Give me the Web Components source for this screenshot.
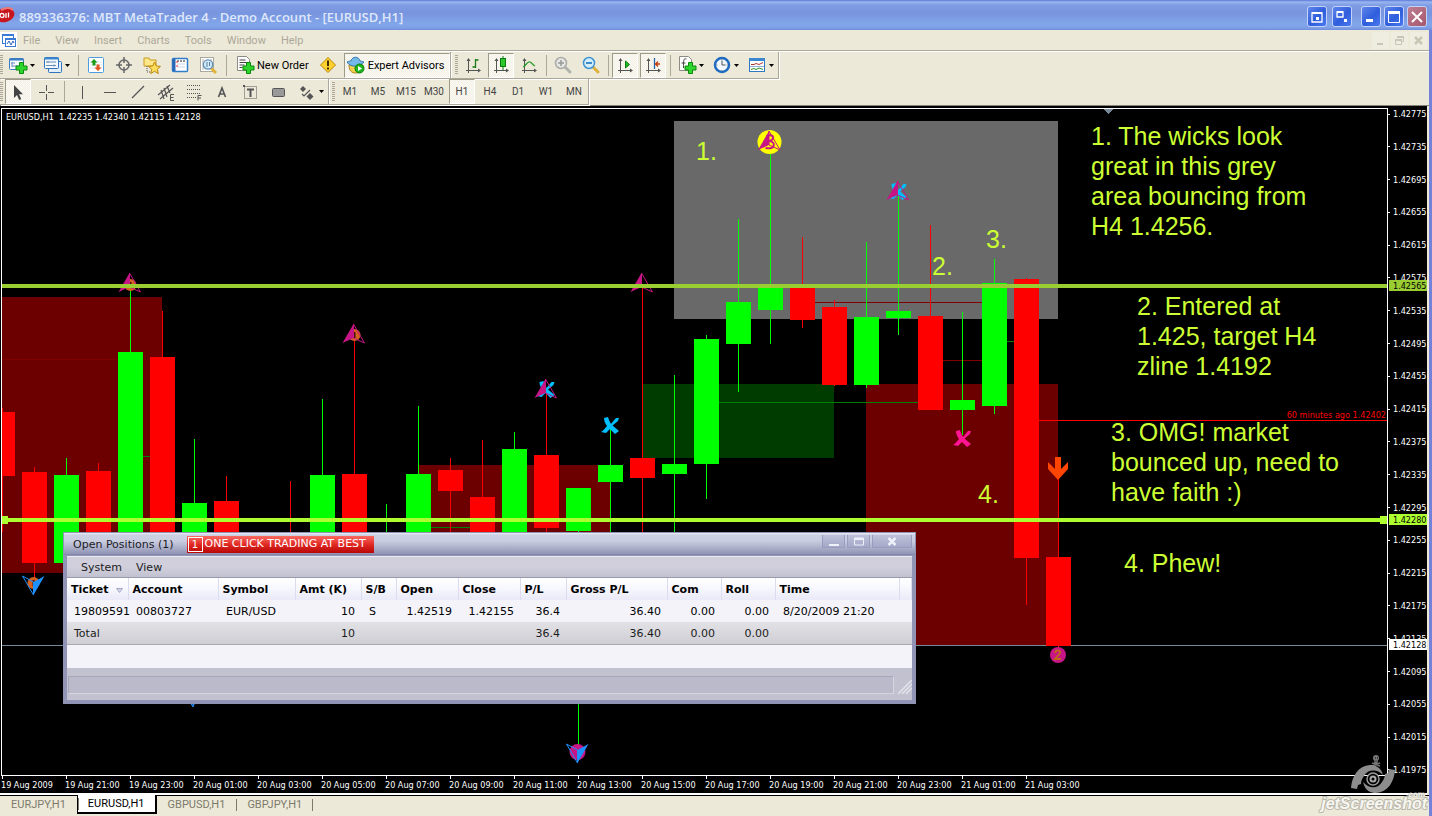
<!DOCTYPE html>
<html lang="en">
<head>
<meta charset="utf-8">
<title>889336376: MBT MetaTrader 4 - Demo Account - [EURUSD,H1]</title>
<style>
  html, body { margin: 0; height: 100%; }
  body { background: #ece9d8; font-family: Roboto, "Noto Sans", sans-serif; font-size: 11px; overflow: hidden; }
</style>
</head>
<body>
<trader-app></trader-app>
<script>
const define = (name, html, setup) => {
  const template = document.createElement('template');
  template.innerHTML = html;
  customElements.define(name, class extends HTMLElement {
    constructor() {
      super();
      this.attachShadow({ mode: 'open' }).append(template.content.cloneNode(true));
    }
    connectedCallback() { if (setup) setup(this, this.shadowRoot); }
  });
};

/* ---------- toolbar glyphs, 20 x 20 each ---------- */
const plus = '<path d="M11.5 7.500h4v3.500h3.500v4h-3.500v3.500h-4v-3.500h-3.500v-4h3.500z" fill="#2fd52f" stroke="#0a8a0a"/>';
const axes = '<path d="M5.500 4v14M3 15.500h14" stroke="#555" fill="none"/><path d="M3.500 6l2-3 2 3zM15 13.500l3 2-3 2z" fill="#555"/>';
const glass = (rim, fill, handle) => `<path d="M12 12l5 5" stroke="${handle}" stroke-width="3" stroke-linecap="round"/><circle cx="8" cy="8" r="5.500" fill="${fill}" stroke="${rim}" stroke-width="1.500"/>`;
const ICONS = {
  newchart: '<rect x="1.500" y="3.500" width="14" height="11" rx="1" fill="#f4faff" stroke="#3b7cc0"/><path d="M1.500 4.500h14" stroke="#3b7cc0" stroke-width="2"/><path d="M4 7v5M3 8h4M4 11h6" stroke="#6c8fb4"/>' + plus,
  profiles: '<rect x="5.500" y="6.500" width="13" height="11" rx="1" fill="#e2effb" stroke="#2f74bd"/><rect x="1.500" y="2.500" width="14" height="11" rx="1" fill="#f2f8fe" stroke="#2f74bd"/><path d="M1.500 3.500h14" stroke="#3b86d0" stroke-width="2"/><path d="M3 7h10M3 10.500h10M5 6v2M11 9.500v2" stroke="#6a8db0"/>',
  market: '<rect x="2.500" y="2.500" width="15" height="15" rx="1" fill="#fff" stroke="#4a9be0"/><path d="M4 7h12M4 10h12M4 13h12" stroke="#dbe6ef"/><path d="M8 4l3.500 3.500h-2v3h-3v-3h-2z" fill="#1a9c1a"/><path d="M12 16l3.500-3.500h-2v-3h-3v3h-2z" fill="#e2551d"/>',
  crosshair: '<circle cx="10" cy="10" r="5" fill="none" stroke="#666" stroke-width="1.500"/><path d="M10 2v6M10 12v6M2 10h6M12 10h6" stroke="#666" stroke-width="1.500"/>',
  navigator: '<path d="M2 3h5l1 2h6v6H2z" fill="#ffe88a" stroke="#c79a1c"/><path d="M5 11v6h4" stroke="#555" stroke-dasharray="1 1" fill="none"/><path d="M12.500 7l1.800 4 4.200.4-3.200 2.900 1 4.200-3.800-2.200-3.800 2.200 1-4.200L6.500 11.400l4.200-.4z" fill="#ffdf5a" stroke="#b98711"/>',
  terminal: '<rect x="2.500" y="3.500" width="15" height="13" rx="1" fill="#fff" stroke="#2f7ccc" stroke-width="1.500"/><path d="M4 4v12" stroke="#2868b4" stroke-width="3"/><path d="M7 6h9" stroke="#222" stroke-dasharray="2 1"/><path d="M7 9h8M7 12h8" stroke="#c9d5e4"/><path d="M7 6v2M7 10v2" stroke="#e33"/>',
  tester: '<rect x="2.500" y="2.500" width="13" height="14" fill="#fff" stroke="#a9a9a0"/><path d="M5 4v11M8 5v9M13 4v8" stroke="#c1b69b"/><path d="M13 13l5 5" stroke="#e2b23a" stroke-width="3"/><circle cx="10" cy="9.500" r="4.700" fill="#cfe9fb" fill-opacity=".85" stroke="#5d8fb8" stroke-width="1.300"/><path d="M9 7v5M11.500 7v4" stroke="#5580a2"/>',
  order: '<path d="M2.500 1.500h9l3 3v11h-12z" fill="#fff" stroke="#8c8c84"/><path d="M4.500 5h6M4.500 7.500h8M4.500 10h5M4.500 12.500h3" stroke="#444"/>' + plus,
  warning: '<path d="M10 2.500l7.500 7.500-7.500 7.500L2.500 10z" fill="#ffd12e" stroke="#b88706" stroke-linejoin="round"/><path d="M10 5.500v5.500M10 12.500v2" stroke="#3c2d00" stroke-width="2"/>',
  expert: '<path d="M3 10c0 8 5 8 7 8s7-1 7-8z" fill="#f3cf4e" stroke="#ad8520"/><path d="M1 7c3 6 14 5 17 0-3-1-3-1-4-1-1-5-8-5-9 0-1 0-2 0-4 1z" fill="#74b9ea" stroke="#3579ab"/><circle cx="13.500" cy="13.500" r="4.500" fill="#1fb51f" stroke="#0b7d0b"/><path d="M12 11l4 2.500-4 2.500z" fill="#fff"/>',
  bars: axes + '<path d="M12.500 4v9M12.500 5h3M9.500 12h3" stroke="#1a7a1a" fill="none" stroke-width="1.300"/>',
  candles: axes + '<path d="M12 1v14" stroke="#0a7a0a"/><rect x="9.500" y="3.500" width="5" height="8" fill="#2ec82e" stroke="#0a7a0a"/>',
  line: axes + '<path d="M4 12c3-1 4-6 7-5 2 1 3 3 5 4" stroke="#2b9c2b" fill="none" stroke-width="1.300"/>',
  zoomin: glass('#aaa', '#e6e6e2', '#b3b3ad') + '<path d="M5 8h6M8 5v6" stroke="#999" stroke-width="1.500"/>',
  zoomout: glass('#3e94d2', '#d3edfc', '#dfb03a') + '<path d="M5 8h6" stroke="#2d7fc0" stroke-width="1.800"/>',
  scroll: axes + '<path d="M10.500 6l4 3.500-4 3.500z" fill="#27b827" stroke="#0b7d0b"/>',
  shift: axes + '<path d="M11.500 3v11" stroke="#2b63a8" stroke-width="1.300"/><path d="M17 9h-4M15 6.500L12.500 9l2.500 2.500" stroke="#c43a0a" fill="none" stroke-width="1.300"/>',
  indicator: '<path d="M2.500 1.500h9l3 3v11h-12z" fill="#fff" stroke="#8c8c84"/><path d="M9.500 4c-3-1-3 1-3 9M4.500 8h4" stroke="#444" fill="none"/>' + plus,
  period: '<circle cx="10" cy="10" r="7" fill="#f2f8fd" stroke="#1f6bc1" stroke-width="2.500"/><path d="M10 5.500V10h3.500" stroke="#555" fill="none"/><path d="M10 4v1M10 15v1M4.500 10h1M14.500 10h1" stroke="#888"/>',
  templates: '<rect x="2.500" y="3.500" width="15" height="13" fill="#fff" stroke="#2f78c4"/><path d="M2 4.500h16" stroke="#3b86d0" stroke-width="3"/><path d="M4 9.500h3l2-1 3 1 4-2" stroke="#a33" fill="none"/><path d="M3 11.500h14" stroke="#8fb2d2"/><path d="M4 14.500l3-1 2 1 3-1.500 4 1.500" stroke="#2a922a" fill="none"/>',
  cursor: '<path d="M6 3v13l3-3 2.200 5 2-1-2.200-4.800H15z" fill="#444"/>',
  cross: '<path d="M10.500 3v6M10.500 12v6M3 10.500h6M12 10.500h6" stroke="#555"/>',
  vline: '<path d="M10.500 4v13" stroke="#555"/>',
  hline: '<path d="M4 10.500h12" stroke="#555"/>',
  trend: '<path d="M4 16L16 4" stroke="#555" stroke-width="1.300"/>',
  channel: '<path d="M2 13L14 3M4 17L17 6M5 8l3 9M8 6l3 9M11 4l3 7" stroke="#555" stroke-width="1.200"/><path d="M18 12.500h-3.500v6h3.500M14.500 15.500h3" stroke="#555" fill="none"/>',
  fibo: '<path d="M3 3.500h14M3 7.500h14M3 11.500h14M3 15.500h9" stroke="#555" stroke-dasharray="1 1"/><path d="M17.500 13.500h-3.500v5M14 16h3" stroke="#555" fill="none"/>',
  text: '<path d="M6.500 15l3.500-9 3.500 9M7.500 12h5" stroke="#555" stroke-width="1.600" fill="none"/>',
  label: '<rect x="4.500" y="4.500" width="12" height="12" fill="none" stroke="#555" stroke-dasharray="1 1"/><path d="M7 7.500h7M10.500 7.500V15" stroke="#555" stroke-width="2"/><rect x="3" y="3" width="2" height="2" fill="#555"/>',
  rect: '<rect x="4.500" y="6.500" width="12" height="8" rx="1" fill="#999" stroke="#555"/>',
  arrows: '<path d="M6 4l3 3-3 3-3-3z" fill="#555"/><path d="M5 12l2 2 6-6" fill="none" stroke="#555" stroke-width="1.200"/><path d="M13 11l3.500 3.500L13 18l-3.500-3.500z" fill="#555"/>'
};

define('tool-button', `
<style>
  :host { display: flex; }
  button { display: flex; align-items: center; justify-content: center; gap: 2px; box-sizing: border-box; width: 28px; height: 25px; padding: 0; margin: 0;
    border: 1px solid transparent; background: none; font: 11px Roboto, "Noto Sans", sans-serif; color: #000; white-space: nowrap; }
  svg { width: 20px; height: 20px; flex: none; }
  svg.caret { width: 5px; height: 3px; }
  :host([drop]) button { width: var(--drop, 36px); gap: 2px; }
  :host([wide]) button { width: auto; padding: 0 4px; }
  :host([period]) button { color: #444; font-size: 10px; }
  :host([pressed]) button { border-color: #9d9a88 #fff #fff #9d9a88; background: repeating-conic-gradient(#f3f1e6 0 25%, #faf9f4 0 50%) 0 0 / 2px 2px; margin-right: 1px; margin-left: 1px; width: 26px; }
  :host([pressed][wide]) button { width: auto; margin: 0 0 0 2px; padding: 0 5px 0 1px; }
</style>
<button type="button"><slot></slot></button>`, (host, root) => {
  const button = root.querySelector('button');
  const icon = host.getAttribute('icon');
  if (icon) button.insertAdjacentHTML('afterbegin', `<svg viewBox="0 0 20 20" fill="none" aria-hidden="true">${ICONS[icon]}</svg>`);
  if (host.hasAttribute('label')) button.setAttribute('aria-label', host.getAttribute('label'));
  if (host.hasAttribute('drop')) button.insertAdjacentHTML('beforeend', '<svg class="caret" viewBox="0 0 5 3" aria-hidden="true"><path d="M0 0h5L2.500 3z" fill="#000"/></svg>');
  if (host.hasAttribute('pressed')) button.setAttribute('aria-pressed', 'true');
});

define('tool-sep', `
<style>
  :host { display: flex; justify-content: center; align-items: center; width: var(--sep, 8px); }
  i { width: 1px; height: 21px; background: #aca899; }
</style><i></i>`);

define('tool-group', `
<style>
  :host { display: flex; align-items: center; box-sizing: border-box; height: 27px; border-right: 1px solid #aca899; border-bottom: 1px solid #aca899; box-shadow: 1px 1px 0 #fff; padding-left: var(--lead, 0); }
  i { width: 3px; height: 20px; margin-right: 1px; background: repeating-linear-gradient(#aca899 0 1px, transparent 1px 2px); }
</style><i></i><slot></slot>`);

define('window-title', `
<style>
  :host { display: flex; align-items: center; height: 30px; box-sizing: border-box; padding-right: 5px;
    background: linear-gradient(#5a79d8 0, #9ab6f0 2px, #7f9de4 5px, #7894de 13px, #82a6ea 24px, #7d9fe6 28px, #6f8bdb 30px); color: #dfe8fb; }
  .logo { width: 16px; height: 16px; flex: none; }
  h1 { flex: 1; margin: 0 0 0 3px; padding-top: 3px; font: 600 13px/20px "Open Sans", "Noto Sans", sans-serif; white-space: nowrap; overflow: hidden; }
  .buttons { display: flex; gap: 3px; padding-top: 3px; }
  .buttons .pair { display: flex; gap: 5px; margin-right: 6px; }
  button { width: 20px; height: 21px; padding: 0; display: grid; place-items: center; border: 1px solid #c3d2f6; border-radius: 3px; background: linear-gradient(135deg, #5f86ea, #2f5ddc 55%, #4a7bf0); }
  button.close { background: linear-gradient(135deg, #bf7f92, #a5566c); }
  button svg { width: 12px; height: 12px; }
</style>
<svg class="logo" viewBox="0 0 16 16" aria-hidden="true"><ellipse cx="5" cy="8" rx="9.500" ry="7" transform="rotate(-16 5 8)" fill="#c8141c"/><path d="M1 3c4-2 9-3 12 0" stroke="#ee7a78" stroke-width="2" fill="none"/><circle cx="2" cy="8.500" r="2" fill="none" stroke="#fff" stroke-width="1.300"/><path d="M6 6v5M8.500 5.500v5" stroke="#fff" stroke-width="1.300"/></svg>
<h1>889336376: MBT MetaTrader 4 - Demo Account - [EURUSD,H1]</h1>
<div class="buttons">
  <div class="pair">
    <button type="button" aria-label="Tray"><svg viewBox="0 0 12 12"><path d="M1 2h10v9H1z" fill="none" stroke="#fff" stroke-width="1.300"/><path d="M1 1h10v2H1zM5 6h3v3H5z" fill="#fff"/></svg></button>
    <button type="button" aria-label="Second screen"><svg viewBox="0 0 12 12"><path d="M1 1h6v5H1z" fill="none" stroke="#fff" stroke-width="1.300"/><path d="M1 0h6v2H1zM8 8h3v3H8z" fill="#fff"/></svg></button>
  </div>
  <button type="button" aria-label="Minimize"><svg viewBox="0 0 12 12"><path d="M1 8h7v3H1z" fill="#fff"/></svg></button>
  <button type="button" aria-label="Maximize"><svg viewBox="0 0 12 12"><path d="M.5 .5h11v11H.5z" fill="none" stroke="#fff"/><path d="M0 0h12v3H0z" fill="#fff"/></svg></button>
  <button type="button" class="close" aria-label="Close"><svg viewBox="0 0 12 12"><path d="M1 1l10 10M11 1L1 11" stroke="#fff" stroke-width="2"/></svg></button>
</div>`);

define('menu-bar', `
<style>
  :host { display: flex; align-items: center; height: 20px; border-bottom: 1px solid #aca899; box-shadow: 0 1px 0 #fff; margin-bottom: 1px; }
  .doc { width: 17px; height: 17px; flex: none; background: #fff; }
  nav { display: flex; flex: 1; gap: 15px; padding-left: 6px; }
  button { border: 0; padding: 0; background: none; font: 11px Roboto, "Noto Sans", sans-serif; color: #aca899; }
  .mdi { display: flex; gap: 2px; padding-right: 2px; }
  .mdi button { width: 17px; height: 17px; display: grid; place-items: center; background: #efede0; }
  .mdi svg { width: 11px; height: 11px; }
</style>
<svg class="doc" viewBox="0 0 17 17" aria-hidden="true"><rect x="2.500" y="2.500" width="11" height="9" fill="#fff" stroke="#3b7bd8"/><rect x="5.500" y="6.500" width="10" height="8" fill="#fff" stroke="#3b7bd8"/><path d="M2 3h12M5 7h11" stroke="#3b7bd8" stroke-width="2"/><path d="M7 12l2-3 2 4 2-4 1 2" stroke="#2b63c0" fill="none"/></svg>
<nav><button type="button">File</button><button type="button">View</button><button type="button">Insert</button><button type="button">Charts</button><button type="button">Tools</button><button type="button">Window</button><button type="button">Help</button></nav>
<div class="mdi">
  <button type="button" aria-label="Minimize chart"><svg viewBox="0 0 11 11"><path d="M2 8h6v2H2z" fill="#c9c6b6"/></svg></button>
  <button type="button" aria-label="Restore chart"><svg viewBox="0 0 11 11"><path d="M1.500 4.500h6v5h-6zM3.500 3V1.500h6v5H8" fill="none" stroke="#c9c6b6"/><path d="M1 5h7M3 2h7" stroke="#c9c6b6" stroke-width="2"/></svg></button>
  <button type="button" aria-label="Close chart"><svg viewBox="0 0 11 11"><path d="M2 2l7 7M9 2L2 9" stroke="#c9c6b6" stroke-width="2.500"/></svg></button>
</div>`);

define('chart-note', `
<style>
  :host { position: absolute; display: block; font: 25px/30px "Liberation Sans", Arial, sans-serif; color: #cf3; }
  slot { display: block; white-space: pre; }
</style><slot></slot>`);

/* ---------- drawn part of the chart ---------- */
const UP = '#00ff00', DOWN = '#ff0000';
// centre x, direction, body top, body bottom, wick top, wick bottom
const CANDLES = [
  [2, DOWN, 412, 476, 408, 532], [34, DOWN, 472, 563, 467, 579], [66, UP, 475, 563, 458, 563],
  [98, DOWN, 471, 560, 463, 560], [130, UP, 352, 560, 286, 560], [162, DOWN, 357, 560, 311, 560],
  [194, UP, 503, 560, 439, 560], [226, DOWN, 501, 560, 476, 560], [290, DOWN, 540, 560, 481, 560],
  [322, UP, 475, 560, 399, 560], [354, DOWN, 474, 560, 338, 560], [386, UP, 540, 560, 504, 560],
  [418, UP, 474, 560, 406, 560], [450, DOWN, 470, 491, 458, 560], [482, DOWN, 497, 560, 440, 560],
  [514, UP, 449, 560, 432, 560], [546, DOWN, 455, 528, 394, 560], [578, UP, 488, 531, 531, 745],
  [610, UP, 465, 482, 428, 560], [642, DOWN, 458, 478, 288, 560], [674, UP, 464, 474, 375, 560],
  [706, UP, 339, 464, 335, 499], [738, UP, 302, 344, 219, 392], [770, UP, 286, 310, 152, 344],
  [802, DOWN, 287, 320, 237, 328], [834, DOWN, 307, 385, 300, 386], [866, UP, 317, 385, 242, 388],
  [898, UP, 311, 318, 196, 335], [930, DOWN, 316, 410, 225, 410], [962, UP, 400, 410, 312, 435],
  [994, UP, 283, 406, 259, 414], [1026, DOWN, 279, 558, 278, 605], [1058, DOWN, 557, 646, 478, 662]
];
const box = (x, y, w, h, fill) => `<rect x="${x}" y="${y}" width="${w}" height="${h}" fill="${fill}"/>`;
const candle = ([x, c, top, bottom, high, low]) => box(x, high, 1, low - high, c) + box(x - 12, top, 25, bottom - top, c);
const upArrow = (x, y, under = '') => `<g transform="translate(${x} ${y})">${under}<path d="M0-11L-11 8 0 3z" fill="#c71585"/><path d="M0-11L11 8 0 3z" fill="none" stroke="#c71585"/></g>`;
const downArrow = (x, y, under = '') => `<g transform="translate(${x} ${y})">${under}<path d="M0 11L11-8 0-2z" fill="#1e90ff"/><path d="M0 11L-11-8 0-2z" fill="none" stroke="#1e90ff"/></g>`;
const orb = (r, fill) => `<circle r="${r}" fill="${fill}"/>`;
const ember = orb(6, '#d2601e') + '<path d="M0-3v6" stroke="#501010" stroke-width="2"/>';
const tick = (color) => `<path d="M-6-8l4-1C-1-5 1-2 2-1L9 5 5 8 0 3-4 7l-5-1c2-1 4-4 6-6C-5-3-6-5-6-8zM0-1l6-7h3l-1 3-6 5z" fill="${color}"/>`;
const at = (x, y, inner) => `<g transform="translate(${x} ${y})">${inner}</g>`;

define('price-plot', `
<style>
  :host { display: block; position: relative; overflow: hidden; border: 1px solid #fff; box-sizing: border-box; }
  svg { display: block; position: absolute; inset: 0; width: 100%; height: 100%; }
  .ohlc { position: absolute; left: 4px; top: 2px; font: 9px/12px "DejaVu Sans Condensed", "DejaVu Sans", sans-serif; color: #fff; white-space: pre; }
  .ago { position: absolute; right: 1px; top: 300px; font: 9px/12px "DejaVu Sans Condensed", "DejaVu Sans", sans-serif; color: #f00; }
</style>
<svg aria-hidden="true" shape-rendering="crispEdges"></svg>
<div class="ohlc">EURUSD,H1  1.42235 1.42340 1.42115 1.42128</div>
<div class="ago">60 minutes ago 1.42402</div>
<slot></slot>`, (host, root) => {
  root.querySelector('svg').innerHTML = `<g transform="translate(-2 -109)">
    ${box(2, 297, 160, 276, '#6c0000')}${box(418, 465, 192, 80, '#6c0000')}${box(642, 384, 192, 74, '#003c00')}
    ${box(866, 384, 192, 261, '#6c0000')}${box(674, 121, 384, 198, '#696969')}
    ${box(2, 359, 116, 1, '#800000')}${box(143, 456, 8, 1, '#008000')}${box(431, 527, 40, 1, '#008000')}
    ${box(815, 302, 168, 1, '#800000')}${box(719, 402, 200, 1, '#008000')}${box(943, 360, 40, 1, '#800000')}${box(1007, 341, 8, 1, '#008000')}
    ${box(2, 645, '100%', 1, '#778899')}${box(1039, 420, '100%', 1, '#ff0000')}
    ${CANDLES.map(candle).join('')}
    <path d="M1103 109h11l-5.500 5z" fill="#778899"/>
    <g shape-rendering="auto">
      ${upArrow(129.5, 284, at(1, 1, ember))}${upArrow(353.5, 335, at(1, 0, ember))}${upArrow(641.5, 284)}
      ${upArrow(545.5, 390, tick('#00bfff'))}${upArrow(897.5, 192, tick('#00bfff'))}
      ${at(610, 426, tick('#00bfff'))}${at(962, 439, tick('#ff1493'))}
      ${at(769.5, 142, orb(12, '#ffff00') + '<path d="M-3-6c9-3 8 5 2 5 8 0 7 9-3 7" fill="none" stroke="#c71585" stroke-width="2"/>')}${upArrow(769, 142)}
      ${downArrow(33.5, 584, at(0, -1, ember))}${downArrow(577.5, 752, at(0, 0, orb(8, '#c71585')))}${downArrow(193, 696)}
      ${at(1058, 655, orb(8, '#c71585') + '<path d="M-3-2c1-4 6-3 5 0L-3 4h6" fill="none" stroke="#c0681a" stroke-width="1.800"/>')}
      <path d="M1055 457h6v12l7-7v7l-10 11-10-11v-7l7 7z" fill="#ff4500"/>
    </g>
    ${box(2, 284, '100%', 4, '#9acd32')}${box(2, 518, '100%', 4, '#adff2f')}${box(2, 516, 6, 8, '#adff2f')}
    <g transform="translate(-5 0)">${box('100%', 516, 7, 8, '#adff2f')}</g>
  </g>`;
});

define('price-scale', `
<style>
  :host { position: relative; display: flex; flex-direction: column; justify-content: space-between; box-sizing: border-box; width: 39px; font: 9px/12px "DejaVu Sans Condensed", "DejaVu Sans", sans-serif; color: #fff; }
  .step { display: flex; align-items: center; gap: 3px; }
  .step::before { content: ""; width: 2px; height: 1px; background: #fff; }
  .tag { position: absolute; left: 1px; right: 0; height: 11px; line-height: 12px; padding-left: 4px; color: #000; }
  .high { top: 172px; background: #9acd32; } .entry { top: 406px; background: #adff2f; } .last { top: 531px; background: #fff; }
</style>`, (host, root) => {
  for (let pip = 42775; pip >= 41975; pip -= 40) root.append(Object.assign(document.createElement('div'), { className: 'step', textContent: '1.' + pip }));
  for (const [name, value] of [['high', '1.42565'], ['entry', '1.42280'], ['last', '1.42128']])
    root.append(Object.assign(document.createElement('div'), { className: 'tag ' + name, textContent: value }));
});

define('time-scale', `
<style>
  :host { display: flex; height: 17px; overflow: hidden; padding-left: 1px; font: 9px/12px "DejaVu Sans Condensed", "DejaVu Sans", sans-serif; color: #fff; }
  div { flex: none; width: 64px; white-space: nowrap; padding-top: 3px; box-sizing: border-box; background: linear-gradient(#fff, #fff) 1px 0 / 1px 3px no-repeat; }
</style>`, (host, root) => {
  const labels = ['19 Aug 2009', '19 Aug 21:00', '19 Aug 23:00'];
  for (let hour = 1; hour < 24; hour += 2) labels.push(`20 Aug ${String(hour).padStart(2, '0')}:00`);
  labels.push('21 Aug 01:00', '21 Aug 03:00');
  for (const text of labels) root.append(Object.assign(document.createElement('div'), { textContent: text }));
});

define('positions-window', `
<style>
  :host { position: absolute; display: block; width: max-content; box-sizing: border-box; border: 1px solid #8f92b3; background: #9194b4; font: 11px/14px "DejaVu Sans", Verdana, sans-serif; color: #1c1c24; }
  header { display: flex; align-items: center; height: 22px; padding: 0 3px 0 9px; background: linear-gradient(#eceef6 0, #ccd0e4 2px, #cacde0 8px, #9194b4 21px, #7a7d9e 22px); }
  h2 { margin: 0 13px 0 0; padding-top: 2px; font: inherit; }
  .best { display: flex; align-items: center; gap: 2px; height: 17px; padding: 0 8px 0 1px; background: linear-gradient(#fb6a62, #e02a24 50%, #b90606); color: #fff; white-space: nowrap; }
  .best b { box-sizing: border-box; width: 15px; height: 15px; border: 1px solid #fff; font-weight: 400; font-size: 10px; line-height: 13px; text-align: center; }
  .controls { display: flex; gap: 2px; margin-left: auto; align-self: flex-start; padding-top: 2px; }
  .controls button { width: 23px; height: 13px; padding: 0; border: 1px solid #9a9dbd; border-top: 0; background: linear-gradient(#bfc2da, #a5a8c8); display: grid; place-items: center; }
  .controls button:last-child { width: 40px; }
  .controls svg { width: 10px; height: 9px; }
  .body { margin: 1px 3px 3px; background: #f4f3fa; }
  nav { display: flex; gap: 14px; height: 22px; box-sizing: border-box; padding: 4px 14px 0; border-top: 1px solid #ebebf2; border-bottom: 1px solid #9a9aae; background: linear-gradient(#d0cfdb 0 50%, #c2c1d0); }
  nav button { border: 0; padding: 0; background: none; font: inherit; color: inherit; line-height: 14px; align-self: flex-start; }
  table { table-layout: fixed; border-collapse: collapse; width: 845px; }
  th, td { box-sizing: border-box; height: 22px; padding: 2px 6px 0 8px; text-align: left; font-weight: 400; white-space: nowrap; color: #000; }
  th { padding: 1px 0 0 4px; font-weight: 700; background: linear-gradient(#fff, #f6f6fd 50%, #e9e9f8); border-right: 1px solid #dcdcf0; }
  .n { text-align: right; }
  td:first-child { padding: 2px 0 0 7px; }
  tr.total td { background: linear-gradient(#e2e1e6, #cfced4); border-bottom: 1px solid #aaa9b0; color: #1c1c1c; }
  th svg { width: 7px; height: 5px; margin-left: 7px; }
  .empty { height: 23px; }
  footer { display: flex; align-items: flex-end; height: 32px; box-sizing: border-box; padding: 7px 0 6px 1px; background: #c2c1d0; }
  .status { flex: 1; height: 18px; box-sizing: border-box; border: 1px solid #a9a8b8; border-right-color: #d6d5e0; border-bottom-color: #d6d5e0; background: #bbbacb; }
  .grip { width: 14px; height: 14px; margin-left: 4px; }
</style>
<header>
  <h2>Open Positions (1)</h2>
  <div class="best"><b>1</b>ONE CLICK TRADING AT BEST</div>
  <div class="controls">
    <button type="button" aria-label="Minimize"><svg viewBox="0 0 10 9"><path d="M0 7h10v2H0z" fill="#eef0fa"/></svg></button>
    <button type="button" aria-label="Maximize"><svg viewBox="0 0 10 9"><path d="M.5 1h9v7H.5z" fill="none" stroke="#eef0fa"/><path d="M0 1h10v2H0z" fill="#eef0fa"/></svg></button>
    <button type="button" aria-label="Close"><svg viewBox="0 0 10 9"><path d="M1.500 1l7 7M8.500 1l-7 7" stroke="#eef0fa" stroke-width="2.500"/></svg></button>
  </div>
</header>
<div class="body">
  <nav><button type="button">System</button><button type="button">View</button></nav>
  <table>
    <colgroup><col style="width:61px"><col style="width:90px"><col style="width:77px"><col style="width:66px"><col style="width:35px"><col style="width:62px"><col style="width:62px"><col style="width:46px"><col style="width:101px"><col style="width:54px"><col style="width:54px"><col style="width:124px"><col></colgroup>
    <thead><tr><th>Ticket<svg viewBox="0 0 7 5" aria-hidden="true"><path d="M.5.5h6L3.500 4.500z" fill="#d6d9ee" stroke="#a5a8c4"/></svg></th><th>Account</th><th>Symbol</th><th>Amt (K)</th><th>S/B</th><th>Open</th><th>Close</th><th>P/L</th><th>Gross P/L</th><th>Com</th><th>Roll</th><th>Time</th><th></th></tr></thead>
    <tbody>
      <tr><td>19809591</td><td>00803727</td><td>EUR/USD</td><td class="n">10</td><td>S</td><td class="n">1.42519</td><td class="n">1.42155</td><td class="n">36.4</td><td class="n">36.40</td><td class="n">0.00</td><td class="n">0.00</td><td>8/20/2009 21:20</td><td></td></tr>
      <tr class="total"><td>Total</td><td></td><td></td><td class="n">10</td><td></td><td></td><td></td><td class="n">36.4</td><td class="n">36.40</td><td class="n">0.00</td><td class="n">0.00</td><td></td><td></td></tr>
    </tbody>
  </table>
  <div class="empty"></div>
  <footer><div class="status"></div><svg class="grip" viewBox="0 0 14 14" aria-hidden="true"><path d="M0 14L14 0M4 14L14 4M8 14l6-6" stroke="#e4e3ec" stroke-width="1.500"/></svg></footer>
</div>`);

define('chart-tabs', `
<style>
  :host { display: flex; height: 20px; background: #ece9d8; border-top: 1px solid #000; }
  button { position: relative; height: 19px; padding: 0 11px 2px; border: 0; background: none; font: 11px/16px Roboto, "Noto Sans", sans-serif; color: #7d7a6c; }
  button[aria-selected=true] { margin-top: -1px; padding: 1px 10px; background: #fff; color: #000; border: 1px solid #000; border-top: 0; border-width: 0 2px 2px 1px; }
  button:not([aria-selected=true]) + button::before, button.end::after { content: ""; position: absolute; left: 0; top: 3px; width: 1px; height: 12px; background: #7d7a6c; }
  button:first-child + button::before { display: none; }
  button.end::after { left: auto; right: 0; }
</style>
<button type="button" role="tab">EURJPY,H1</button><button type="button" role="tab" aria-selected="true">EURUSD,H1</button><button type="button" role="tab">GBPUSD,H1</button><button type="button" role="tab" class="end">GBPJPY,H1</button>`);

define('brand-mark', `
<style>
  :host { position: absolute; right: 5px; bottom: 0; display: block; width: 106px; height: 62px; }
  svg { position: absolute; left: 30px; top: 0; width: 44px; height: 40px; }
  span { position: absolute; right: 0; bottom: 3px; font: italic 700 16px/18px "Liberation Sans", Arial, sans-serif; color: #f7f6f0; -webkit-text-stroke: 2px #b9b7ab; paint-order: stroke; }
  small { position: absolute; right: 2px; bottom: 17px; font: 700 8px/8px "Liberation Sans", sans-serif; color: #f7f6f0; -webkit-text-stroke: 1px #b9b7ab; paint-order: stroke; }
</style>
<svg viewBox="0 0 44 40" aria-hidden="true">
  <circle cx="25" cy="4" r="3" fill="#777"/><path d="M24 6v3h2V6M21 9l8 3M29 9l-8 3" stroke="#777" stroke-width="1.500"/><path d="M24 4h1M26 4h1" stroke="#000"/>
  <path d="M0 34C1 22 7 12 19 11c5 0 11 2 13 10-6-6-15-6-19 1-2 3-3 5-3 8l-3 1-1 4z" fill="#8d8d8d"/>
  <path d="M44 16c-1 12-7 22-19 23-5 0-11-2-13-11 6 7 15 7 19 0 2-3 3-5 3-8l3-1 1-4z" fill="#8d8d8d"/>
  <circle cx="22" cy="25" r="6" fill="#000" stroke="#999" stroke-width="1.500"/><circle cx="22" cy="25" r="3.500" fill="#aaa"/><circle cx="22" cy="25" r="1.500" fill="#000"/>
</svg>
<small>.com</small><span>jetScreenshot</span>`);

define('trader-app', `
<style>
  :host { position: relative; display: flex; flex-direction: column; min-height: 100vh; box-sizing: border-box; background: #ece9d8; }
  .frame { display: flex; flex-direction: column; flex: 1; border-right: 3px solid #7382d8; }
  .row { display: flex; height: 27px; }
  .row + .row { height: 26px; border-bottom: 1px solid #85837a; }
  .row:first-of-type tool-group { --drop: 35px; }
  .row:first-of-type tool-group + tool-group { --sep: 6px; --lead: 4px; --drop: 35px; }
  .row + .row tool-group { height: 26px; }
  .row + .row tool-group + tool-group { --lead: 3px; }
  .chart { flex: 1; display: grid; grid-template-columns: 1fr auto; grid-template-rows: 1fr auto; padding: 2px 0 0 1px; margin-right: 2px; background: #000; border-bottom: 2px solid #fff; }
  time-scale { grid-column: 1 / 3; margin-left: -1px; }
</style>
<window-title></window-title>
<div class="frame">
  <menu-bar></menu-bar>
  <div class="row">
    <tool-group>
      <tool-button icon="newchart" label="New chart" drop></tool-button><tool-button icon="profiles" label="Profiles" drop></tool-button><tool-sep></tool-sep>
      <tool-button icon="market" label="Market watch"></tool-button><tool-button icon="crosshair" label="Data window"></tool-button><tool-button icon="navigator" label="Navigator"></tool-button><tool-button icon="terminal" label="Terminal"></tool-button><tool-button icon="tester" label="Strategy tester"></tool-button><tool-sep></tool-sep>
      <tool-button icon="order" wide>New Order</tool-button><tool-button icon="warning" label="Alerts"></tool-button><tool-button icon="expert" wide pressed>Expert Advisors</tool-button>
    </tool-group>
    <tool-group>
      <tool-button icon="bars" label="Bar chart"></tool-button><tool-button icon="candles" label="Candlesticks" pressed></tool-button><tool-button icon="line" label="Line chart"></tool-button><tool-sep></tool-sep>
      <tool-button icon="zoomin" label="Zoom in"></tool-button><tool-button icon="zoomout" label="Zoom out"></tool-button><tool-sep></tool-sep>
      <tool-button icon="scroll" label="Auto scroll" pressed></tool-button><tool-button icon="shift" label="Chart shift" pressed></tool-button><tool-sep></tool-sep>
      <tool-button icon="indicator" label="Indicators" drop></tool-button><tool-button icon="period" label="Periods" drop></tool-button><tool-button icon="templates" label="Templates" drop></tool-button>
    </tool-group>
  </div>
  <div class="row">
    <tool-group>
      <tool-button icon="cursor" label="Cursor" pressed></tool-button><tool-button icon="cross" label="Crosshair"></tool-button><tool-sep></tool-sep>
      <tool-button icon="vline" label="Vertical line"></tool-button><tool-button icon="hline" label="Horizontal line"></tool-button><tool-button icon="trend" label="Trendline"></tool-button><tool-button icon="channel" label="Equidistant channel"></tool-button><tool-button icon="fibo" label="Fibonacci"></tool-button><tool-button icon="text" label="Text"></tool-button><tool-button icon="label" label="Text label"></tool-button><tool-button icon="rect" label="Rectangle"></tool-button><tool-button icon="arrows" label="Arrows" drop></tool-button>
    </tool-group>
    <tool-group>
      <tool-button period>M1</tool-button><tool-button period>M5</tool-button><tool-button period>M15</tool-button><tool-button period>M30</tool-button><tool-button period pressed>H1</tool-button><tool-button period>H4</tool-button><tool-button period>D1</tool-button><tool-button period>W1</tool-button><tool-button period>MN</tool-button>
    </tool-group>
  </div>
  <div class="chart">
    <price-plot>
      <chart-note style="left:1089px;top:12px">1. The wicks look
great in this grey
area bouncing from
H4 1.4256.</chart-note>
      <chart-note style="left:1135px;top:182px">2. Entered at
1.425, target H4
zline 1.4192</chart-note>
      <chart-note style="left:1109px;top:308px">3. OMG! market
bounced up, need to
have faith :)</chart-note>
      <chart-note style="left:1122px;top:439px">4. Phew!</chart-note>
      <chart-note style="left:694px;top:27px">1.</chart-note>
      <chart-note style="left:930px;top:142px">2.</chart-note>
      <chart-note style="left:984px;top:115px">3.</chart-note>
      <chart-note style="left:976px;top:370px">4.</chart-note>
      <positions-window style="left:61px;top:423px"></positions-window>
    </price-plot>
    <price-scale></price-scale>
    <time-scale></time-scale>
  </div>
  <chart-tabs></chart-tabs>
</div>
<brand-mark></brand-mark>`);
</script>
</body>
</html>
